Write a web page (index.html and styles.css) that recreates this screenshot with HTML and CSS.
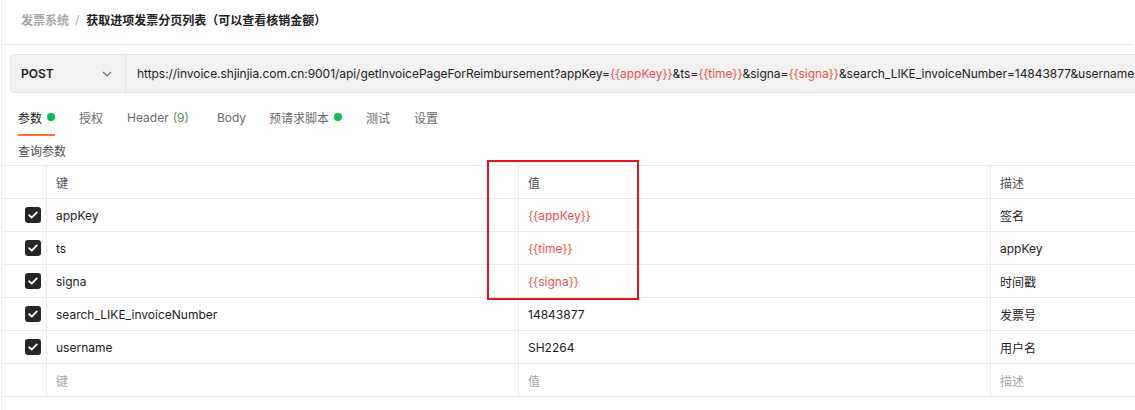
FILE: index.html
```html
<!DOCTYPE html>
<html lang="zh">
<head>
<meta charset="utf-8">
<title>获取进项发票分页列表</title>
<link rel="stylesheet" href="styles.css">
</head>
<body>
<div class="page">
  <div class="crumbs">
    <span class="crumb-parent">发票系统</span>
    <span class="crumb-sep">/</span>
    <span class="crumb-title">获取进项发票分页列表（可以查看核销金额）</span>
  </div>

  <div class="urlbar">
    <div class="method">
      <span class="method-name">POST</span>
      <svg class="chev" width="10" height="6" viewBox="0 0 10 6"><path d="M1 1l4 4 4-4" fill="none" stroke="#6b6b6b" stroke-width="1.1"/></svg>
    </div>
    <div class="url">https://invoice.shjinjia.com.cn:9001/api/getInvoicePageForReimbursement?appKey=<span class="var">{{appKey}}</span>&amp;ts=<span class="var">{{time}}</span>&amp;signa=<span class="var">{{signa}}</span>&amp;search_LIKE_invoiceNumber=14843877&amp;username=SH2264</div>
  </div>

  <div class="tabs">
    <div class="tab active">参数<span class="dot"></span></div>
    <div class="tab">授权</div>
    <div class="tab">Header <span class="count">(9)</span></div>
    <div class="tab tab-body">Body</div>
    <div class="tab">预请求脚本<span class="dot"></span></div>
    <div class="tab">测试</div>
    <div class="tab">设置</div>
  </div>

  <div class="section-label">查询参数</div>

  <div class="table">
    <div class="row head">
      <div class="c-check"></div>
      <div class="c-key">键</div>
      <div class="c-val">值</div>
      <div class="c-desc">描述</div>
    </div>
    <div class="row">
      <div class="c-check"><span class="cb"><svg width="10" height="8" viewBox="0 0 10 8"><path d="M1.2 4.2l2.5 2.4L8.8 1.4" fill="none" stroke="#fff" stroke-width="1.8" stroke-linecap="round" stroke-linejoin="round"/></svg></span></div>
      <div class="c-key">appKey</div>
      <div class="c-val var">{{appKey}}</div>
      <div class="c-desc">签名</div>
    </div>
    <div class="row">
      <div class="c-check"><span class="cb"><svg width="10" height="8" viewBox="0 0 10 8"><path d="M1.2 4.2l2.5 2.4L8.8 1.4" fill="none" stroke="#fff" stroke-width="1.8" stroke-linecap="round" stroke-linejoin="round"/></svg></span></div>
      <div class="c-key">ts</div>
      <div class="c-val var">{{time}}</div>
      <div class="c-desc">appKey</div>
    </div>
    <div class="row">
      <div class="c-check"><span class="cb"><svg width="10" height="8" viewBox="0 0 10 8"><path d="M1.2 4.2l2.5 2.4L8.8 1.4" fill="none" stroke="#fff" stroke-width="1.8" stroke-linecap="round" stroke-linejoin="round"/></svg></span></div>
      <div class="c-key">signa</div>
      <div class="c-val var">{{signa}}</div>
      <div class="c-desc">时间戳</div>
    </div>
    <div class="row">
      <div class="c-check"><span class="cb"><svg width="10" height="8" viewBox="0 0 10 8"><path d="M1.2 4.2l2.5 2.4L8.8 1.4" fill="none" stroke="#fff" stroke-width="1.8" stroke-linecap="round" stroke-linejoin="round"/></svg></span></div>
      <div class="c-key">search_LIKE_invoiceNumber</div>
      <div class="c-val">14843877</div>
      <div class="c-desc">发票号</div>
    </div>
    <div class="row">
      <div class="c-check"><span class="cb"><svg width="10" height="8" viewBox="0 0 10 8"><path d="M1.2 4.2l2.5 2.4L8.8 1.4" fill="none" stroke="#fff" stroke-width="1.8" stroke-linecap="round" stroke-linejoin="round"/></svg></span></div>
      <div class="c-key">username</div>
      <div class="c-val">SH2264</div>
      <div class="c-desc">用户名</div>
    </div>
    <div class="row placeholder">
      <div class="c-check"></div>
      <div class="c-key">键</div>
      <div class="c-val">值</div>
      <div class="c-desc">描述</div>
    </div>
  </div>

  <div class="highlight"></div>
</div>
</body>
</html>
```

FILE: styles.css
```css
* { box-sizing: border-box; }
html, body { margin: 0; padding: 0; background: #fff; }
body {
  font-family: "Inter", "Noto Sans CJK SC", sans-serif;
  font-size: 12px;
  color: #212121;
  width: 1135px;
  height: 410px;
  overflow: hidden;
}
.page {
  position: relative;
  margin-left: 1px;
  border-left: 1px solid #ececec;
  height: 410px;
  overflow: hidden;
}
.crumbs {
  height: 45px;
  border-bottom: 1px solid #ebebeb;
  padding-left: 19px;
  display: flex;
  align-items: center;
  padding-bottom: 5px;
  gap: 6px;
  font-size: 12px;
  margin-right: 2px;
}
.crumb-parent { color: #a6a6a6; font-weight: 600; }
.crumb-sep { color: #a6a6a6; margin-right: 1px; }
.crumb-title { color: #212121; font-weight: 600; }

.urlbar {
  margin: 9px 0 0 8px;
  width: 1200px;
  height: 39px;
  background: #f2f2f2;
  border: 1px solid #e6e6e6;
  border-radius: 4px;
  display: flex;
  align-items: center;
  overflow: hidden;
}
.method {
  flex: 0 0 115px;
  height: 100%;
  border-right: 1px solid #e3e3e3;
  display: flex;
  align-items: center;
  justify-content: space-between;
  padding: 0 13px 0 10px;
}
.method-name { font-weight: 600; font-size: 12px; color: #212121; }
.url {
  padding-left: 11px;
  font-size: 12px;
  letter-spacing: -0.04px;
  color: #212121;
  white-space: nowrap;
}
.var { color: #f0524b; }

.tabs {
  display: flex;
  align-items: center;
  height: 40px;
  padding-left: 16px;
  margin-top: 4px;
}
.tab {
  position: relative;
  font-size: 12px;
  color: #6b6b6b;
  display: flex;
  align-items: center;
  height: 100%;
  margin-right: 24px;
}
.tab.active { color: #212121; }
.tab.active::after {
  content: "";
  position: absolute;
  left: 0;
  right: 0;
  bottom: 1px;
  height: 2px;
  background: #ff6c37;
}
.tab-body { margin-left: 4px; margin-right: 23px; }
.count { color: #5a8a5a; margin-left: 4px; }
.dot {
  width: 8px;
  height: 8px;
  border-radius: 50%;
  background: #0cbb52;
  margin-left: 5px;
}

.section-label {
  font-size: 12px;
  color: #505050;
  padding-left: 16px;
  height: 28px;
  display: flex;
  align-items: center;
  padding-bottom: 2px;
}

.table {
  border-top: 1px solid #ebebeb;
}
.row {
  display: grid;
  grid-template-columns: 45px 472px 472px 1fr;
  height: 33px;
  border-bottom: 1px solid #ebebeb;
  font-size: 12px;
}
.row > div {
  display: flex;
  align-items: center;
  padding-left: 9px;
  border-right: 1px solid #ebebeb;
}
.row > div:last-child { border-right: none; }
.row > .c-check { justify-content: flex-end; padding-right: 5px; }
.head > div { color: #505050; }
.placeholder > div { color: #a6a6a6; }
.cb {
  width: 16px;
  height: 16px;
  border-radius: 3px;
  background: #262626;
  display: flex;
  align-items: center;
  justify-content: center;
}

.highlight {
  position: absolute;
  left: 485px;
  top: 160px;
  width: 152px;
  height: 140px;
  border: 2px solid #e5141f;
}
```
